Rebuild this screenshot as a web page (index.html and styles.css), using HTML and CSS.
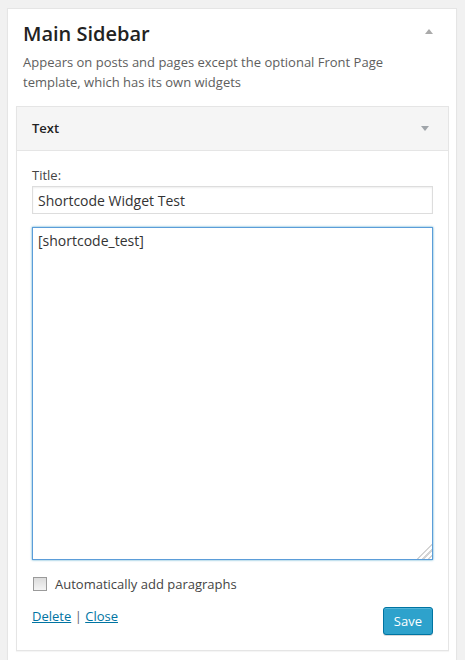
FILE: index.html
```html
<!DOCTYPE html>
<html lang="en">
<head>
<meta charset="utf-8">
<title>Main Sidebar</title>
<link rel="stylesheet" href="styles.css">
</head>
<body>
<div class="sidebar">
  <div class="sidebar-head">
    <h2 class="sidebar-name">Main Sidebar</h2>
    <span class="arrow-up"></span>
  </div>
  <p class="sidebar-desc">Appears on posts and pages except the optional Front Page template, which has its own widgets</p>
  <div class="widget">
    <div class="widget-top">
      <h4 class="widget-title">Text</h4>
      <span class="arrow-down"></span>
    </div>
    <div class="widget-inside">
      <label class="field-label" for="title">Title:</label>
      <input class="field-input" id="title" type="text" value="Shortcode Widget Test">
      <textarea class="field-text">[shortcode_test]</textarea>
      <label class="check-row"><span class="checkbox"></span><span>Automatically add paragraphs</span></label>
      <div class="controls">
        <div class="links"><a href="#">Delete</a> <span class="sep">|</span> <a href="#">Close</a></div>
        <button class="save" type="button">Save</button>
      </div>
    </div>
  </div>
</div>
</body>
</html>
```

FILE: styles.css
```css
html, body {
  margin: 0;
  padding: 0;
  background: #f1f1f1;
  font-family: "Open Sans", "Liberation Sans", sans-serif;
  color: #444;
}
.sidebar {
  margin: 8px 8px 0 7px;
  background: #fff;
  border: 1px solid #e5e5e5;
  box-shadow: 0 1px 1px rgba(0,0,0,.04);
  height: 700px;
  box-sizing: border-box;
}
.sidebar-head {
  display: flex;
  justify-content: space-between;
  align-items: center;
  padding: 11px 23px 0 15px;
}
.sidebar-name {
  margin: 0;
  font-size: 20px;
  font-weight: 600;
  line-height: 28px;
  color: #222;
}
.arrow-up {
  width: 0;
  height: 0;
  border-left: 4px solid transparent;
  border-right: 4px solid transparent;
  border-bottom: 5px solid #aaa;
  margin-top: -5px;
}
.sidebar-desc {
  margin: 4px 15px 14px 15px;
  font-size: 13px;
  line-height: 20px;
  color: #5e5e5e;
}
.widget {
  margin: 0 7px 0 8px;
  border: 1px solid #e5e5e5;
  box-shadow: 0 1px 1px rgba(0,0,0,.04);
}
.widget-top {
  display: flex;
  justify-content: space-between;
  align-items: center;
  background: #f5f5f5;
  border-bottom: 1px solid #e5e5e5;
  padding: 0 19px 0 15px;
}
.widget-title {
  margin: 0;
  padding: 15px 0;
  font-size: 13px;
  line-height: 13px;
  font-weight: 600;
  color: #222;
}
.arrow-down {
  width: 0;
  height: 0;
  border-left: 4px solid transparent;
  border-right: 4px solid transparent;
  border-top: 5px solid #a0a5aa;
}
.widget-inside {
  padding: 15px 15px 15px 15px;
  display: flex;
  flex-direction: column;
}
.field-label {
  font-size: 13px;
  line-height: 18px;
  color: #444;
  margin-bottom: 2px;
}
.field-input {
  box-sizing: border-box;
  height: 28px;
  width: 100%;
  margin: 0;
  padding: 3px 5px;
  border: 1px solid #ddd;
  box-shadow: inset 0 1px 2px rgba(0,0,0,.07);
  font-family: inherit;
  font-size: 14px;
  color: #333;
  outline: none;
}
.field-text {
  box-sizing: border-box;
  width: 100%;
  height: 333px;
  margin: 13px 0 0 0;
  padding: 3px 5px;
  border: 1px solid #5b9dd9;
  box-shadow: 0 0 2px rgba(30,140,190,.8);
  font-family: inherit;
  font-size: 14px;
  line-height: 20px;
  color: #333;
  resize: vertical;
  outline: none;
}
.field-text::-webkit-resizer {
  background:
    linear-gradient(135deg,
      transparent 0 48%, #d4d4d4 48% 56%, transparent 56% 66%,
      #d4d4d4 66% 74%, transparent 74% 84%, #d4d4d4 84% 92%, transparent 92%);
}
.check-row {
  display: flex;
  align-items: center;
  margin-top: 16px;
  font-size: 13px;
  line-height: 16px;
  color: #444;
}
.checkbox {
  box-sizing: border-box;
  width: 14px;
  height: 14px;
  margin: 0 8px 0 1px;
  border: 1px solid #9a9a9a;
  background: linear-gradient(#dcdcdc, #f4f4f4);
}
.controls {
  display: flex;
  justify-content: space-between;
  align-items: flex-start;
  margin-top: 15px;
}
.links {
  font-size: 13px;
  line-height: 18px;
  color: #666;
}
.links a {
  color: #0074a2;
  text-decoration: underline;
}
.sep {
  margin: 0;
}
.save {
  height: 28px;
  padding: 0 10px 1px;
  background: #2ea2cc;
  border: 1px solid #0074a2;
  border-radius: 3px;
  box-shadow: inset 0 1px 0 rgba(120,200,230,.5), 0 1px 0 rgba(0,0,0,.15);
  color: #fff;
  font-family: inherit;
  font-size: 13px;
  line-height: 26px;
}
```
